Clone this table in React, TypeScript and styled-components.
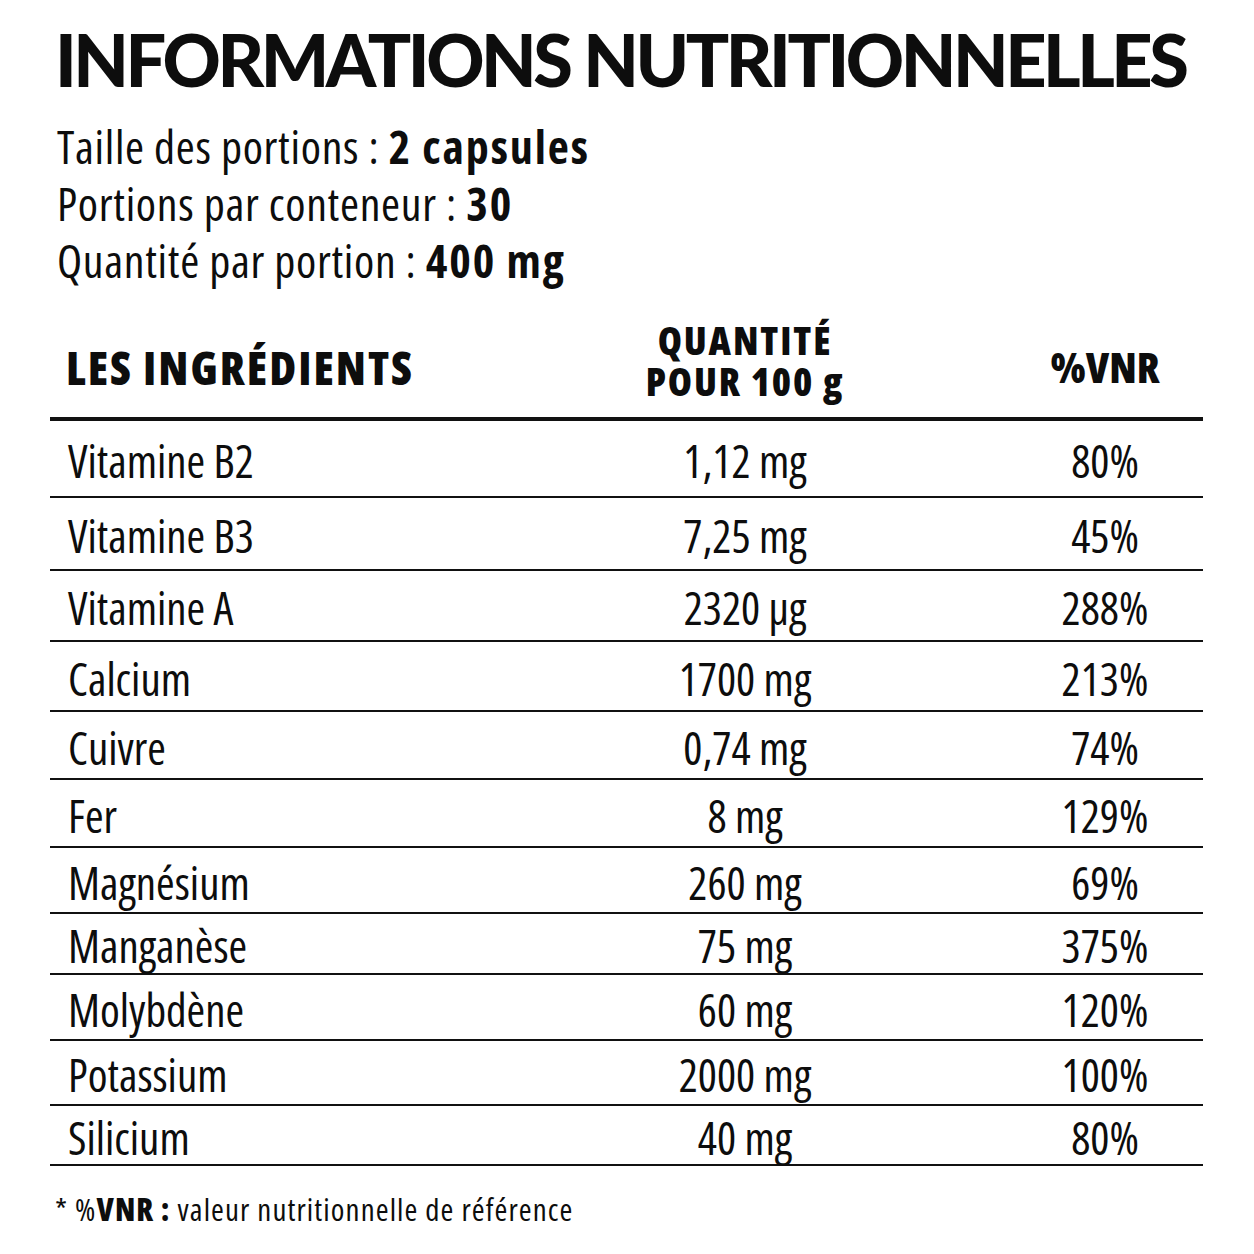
import React from "react";
import styled, { createGlobalStyle } from "styled-components";

const GlobalStyle = createGlobalStyle`
  html, body { margin: 0; padding: 0; background: #ffffff; }
  body { color: #0d0d0d; }
`;

const Page = styled.main`
  width: 1254px;
  box-sizing: border-box;
  padding: 23px 51px 30px 50px;
`;

const Title = styled.h1`
  margin: 0 0 0 5px;
  font-family: "Lato", "Liberation Sans", sans-serif;
  font-weight: 900;
  font-size: 72px;
  line-height: 72px;
  letter-spacing: -3.45px;
  white-space: nowrap;
`;

const Info = styled.div`
  margin: 23px 0 0 7px;
  display: flex;
  flex-direction: column;
`;

const InfoLine = styled.p`
  margin: 0;
  font-family: "Open Sans", "Roboto Condensed", sans-serif;
  font-stretch: 75%;
  font-weight: 400;
  font-size: 46px;
  line-height: 57px;
  letter-spacing: 0.7px;
  white-space: nowrap;
  b {
    font-weight: 700;
    letter-spacing: 1.9px;
  }
`;

const Table = styled.section`
  margin-top: 27px;
  display: flex;
  flex-direction: column;
`;

const Grid = styled.div<{ $h: number; $line: number }>`
  display: grid;
  grid-template-columns: 433px 524px 196px;
  align-items: center;
  box-sizing: content-box;
  height: ${(p) => p.$h}px;
  border-bottom: ${(p) => p.$line}px solid #111;
`;

const HeadCell = styled.div<{ $left?: boolean; $size: number; $track: number }>`
  font-family: "Open Sans", "Roboto Condensed", sans-serif;
  font-stretch: 75%;
  font-weight: 800;
  font-size: ${(p) => p.$size}px;
  line-height: ${(p) => p.$size}px;
  letter-spacing: ${(p) => p.$track}px;
  text-align: ${(p) => (p.$left ? "left" : "center")};
  padding-left: ${(p) => (p.$left ? "16px" : "0")};
  white-space: nowrap;
`;

const HeadStack = styled.div`
  font-family: "Open Sans", "Roboto Condensed", sans-serif;
  font-stretch: 75%;
  font-weight: 800;
  font-size: 39px;
  line-height: 41px;
  letter-spacing: 1.9px;
  text-align: center;
  white-space: nowrap;
  margin-top: -14px;
`;

const Cell = styled.div<{ $left?: boolean }>`
  font-family: "Open Sans", "Roboto Condensed", sans-serif;
  font-stretch: 75%;
  font-weight: 400;
  font-size: 45px;
  line-height: 45px;
  text-align: ${(p) => (p.$left ? "left" : "center")};
  padding-left: ${(p) => (p.$left ? "18px" : "0")};
  padding-top: 4px;
  white-space: nowrap;
`;

const Footnote = styled.p`
  margin: 26px 0 0 5px;
  font-family: "Open Sans", "Roboto Condensed", sans-serif;
  font-stretch: 75%;
  font-weight: 400;
  font-size: 31px;
  line-height: 34px;
  letter-spacing: 1.1px;
  white-space: nowrap;
  b {
    font-weight: 800;
  }
`;

const rows: { name: string; qty: string; vnr: string; h: number }[] = [
  { name: "Vitamine B2", qty: "1,12 mg", vnr: "80%", h: 75 },
  { name: "Vitamine B3", qty: "7,25 mg", vnr: "45%", h: 71 },
  { name: "Vitamine A", qty: "2320 µg", vnr: "288%", h: 69 },
  { name: "Calcium", qty: "1700 mg", vnr: "213%", h: 68 },
  { name: "Cuivre", qty: "0,74 mg", vnr: "74%", h: 66 },
  { name: "Fer", qty: "8 mg", vnr: "129%", h: 66 },
  { name: "Magnésium", qty: "260 mg", vnr: "69%", h: 64 },
  { name: "Manganèse", qty: "75 mg", vnr: "375%", h: 59 },
  { name: "Molybdène", qty: "60 mg", vnr: "120%", h: 64 },
  { name: "Potassium", qty: "2000 mg", vnr: "100%", h: 63 },
  { name: "Silicium", qty: "40 mg", vnr: "80%", h: 58 },
];

export default function App() {
  return (
    <>
      <GlobalStyle />
      <Page>
        <Title>INFORMATIONS NUTRITIONNELLES</Title>
        <Info>
          <InfoLine>
            Taille des portions : <b>2 capsules</b>
          </InfoLine>
          <InfoLine>
            Portions par conteneur : <b>30</b>
          </InfoLine>
          <InfoLine>
            Quantité par portion : <b>400 mg</b>
          </InfoLine>
        </Info>
        <Table>
          <Grid $h={101} $line={4}>
            <HeadCell $left $size={46} $track={2}>
              LES INGRÉDIENTS
            </HeadCell>
            <HeadStack>
              QUANTITÉ
              <br />
              POUR 100 g
            </HeadStack>
            <HeadCell $size={42} $track={0}>
              %VNR
            </HeadCell>
          </Grid>
          {rows.map((r) => (
            <Grid key={r.name} $h={r.h} $line={2}>
              <Cell $left>{r.name}</Cell>
              <Cell>{r.qty}</Cell>
              <Cell>{r.vnr}</Cell>
            </Grid>
          ))}
        </Table>
        <Footnote>
          * %<b>VNR :</b> valeur nutritionnelle de référence
        </Footnote>
      </Page>
    </>
  );
}
